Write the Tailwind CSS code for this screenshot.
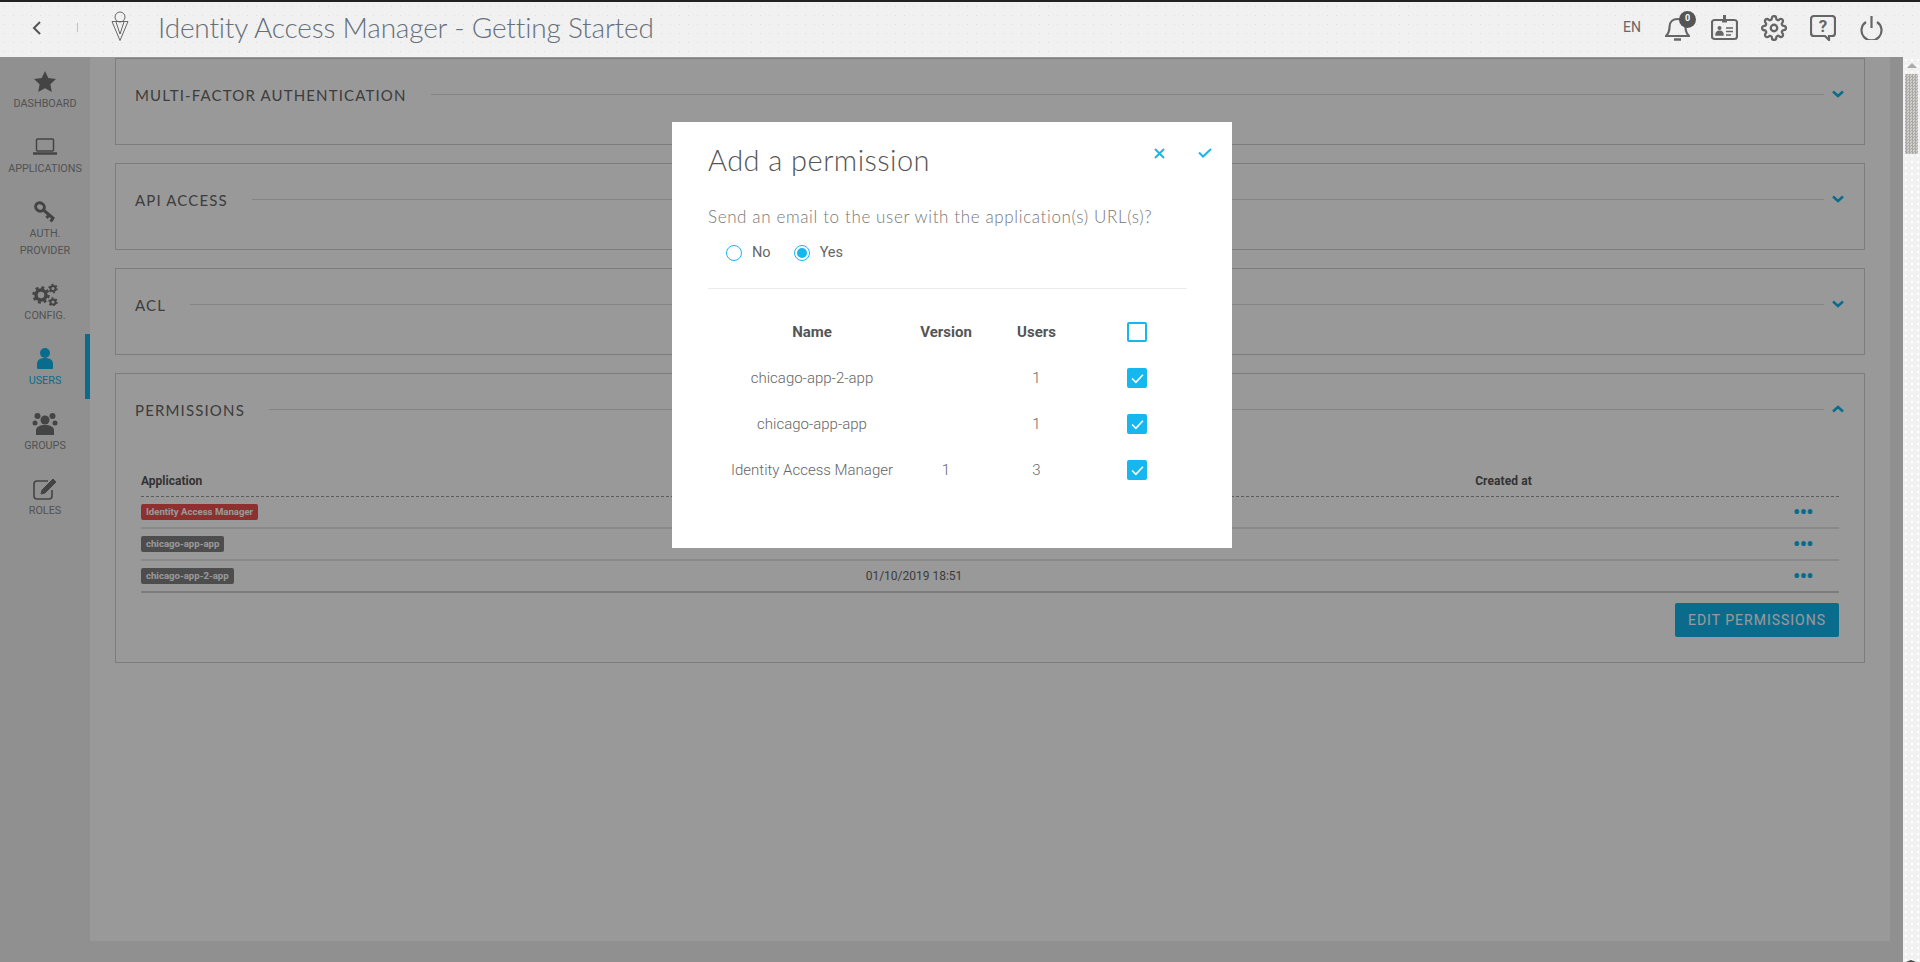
<!DOCTYPE html>
<html lang="en">

<head>
    <meta charset="UTF-8">
    <meta name="viewport" content="width=device-width, initial-scale=1.0">
    <title>Identity Access Manager - Getting Started</title>
    <script src="https://cdn.jsdelivr.net/npm/@tailwindcss/browser@4"></script>
</head>

<body class="relative h-[962px] overflow-hidden bg-[#f1f1f1] font-['Roboto',sans-serif]">
    <!-- header -->
    <header class="relative flex h-[57px] items-center border-t-2 border-[#222] bg-[#f1f1f1] bg-[radial-gradient(#dcdcdc_0.5px,transparent_0.8px)] bg-size-[9px_9px]">
        <svg class="ml-[32px] h-[14px] w-[10px] -translate-y-[2px]" viewBox="0 0 10 14" fill="none" stroke="#555" stroke-width="2"><path d="M8 1 2 7l6 6" /></svg>
        <div class="ml-[35px] h-[9px] w-px -translate-y-[2px] bg-[#c9c0b8]"></div>
        <svg class="ml-[33px] h-[30px] w-[18px] -translate-y-[4px]" viewBox="0 0 18 30" fill="none" stroke="#666" stroke-width="1">
            <circle cx="9" cy="6" r="5" />
            <path d="M1 10.500h16L9 29.500zM5 11l4 12 4-12" />
        </svg>
        <h1 class="ml-[29px] -translate-y-[3px] font-['Lato',sans-serif] text-[28px] font-light tracking-[-0.18px] text-[#66707a]">Identity Access Manager - Getting Started</h1>
        <div class="ml-auto flex items-center text-[#666]">
            <span class="mr-[24px] -translate-y-[2px] text-[14px]">EN</span>
            <div class="relative mr-[21px] h-[28px] w-[25px] -translate-y-[2px]">
                <svg class="h-[28px] w-[25px]" viewBox="0 0 25 28" fill="none" stroke="#666" stroke-width="2.200">
                    <path d="M1 22c2-2 3.500-4 3.500-9 0-5 3.500-8 8-8s8 3 8 8c0 5 1.500 7 3.500 9z" />
                    <path d="M9 25.500h7" stroke-width="2.500" />
                </svg>
                <span class="absolute -right-[6px] -top-[3px] flex h-[17px] w-[17px] items-center justify-center rounded-full bg-[#555] text-[9px] font-bold text-white">0</span>
            </div>
            <svg class="mr-[23px] h-[26px] w-[27px] -translate-y-[2px]" viewBox="0 0 27 26" fill="none" stroke="#666" stroke-width="2.200">
                <rect x="1" y="5" width="25" height="19" rx="2.500" />
                <path d="M11 6h5M13.500 0v5" stroke-width="3" />
                <circle cx="8.500" cy="13" r="2" fill="#666" stroke="none" />
                <path d="M5 20c0-5 7-5 7 0zM15 13h7M15 16.500h7M15 20h5" fill="#666" stroke-width="1.500" />
            </svg>
            <svg class="mr-[23px] h-[26px] w-[26px] -translate-y-[2px]" viewBox="0 0 24 24" fill="none" stroke="#666" stroke-width="2.100">
                <circle cx="12" cy="12" r="3" />
                <path d="M19.400 15a1.650 1.650 0 0 0 .33 1.820l.06.06a2 2 0 0 1 0 2.830 2 2 0 0 1-2.830 0l-.06-.06a1.650 1.650 0 0 0-1.820-.33 1.650 1.650 0 0 0-1 1.510V21a2 2 0 0 1-2 2 2 2 0 0 1-2-2v-.09A1.650 1.650 0 0 0 9 19.400a1.650 1.650 0 0 0-1.820.33l-.06.06a2 2 0 0 1-2.830 0 2 2 0 0 1 0-2.830l.06-.06a1.650 1.650 0 0 0 .33-1.820 1.650 1.650 0 0 0-1.510-1H3a2 2 0 0 1-2-2 2 2 0 0 1 2-2h.09A1.650 1.650 0 0 0 4.600 9a1.650 1.650 0 0 0-.33-1.820l-.06-.06a2 2 0 0 1 0-2.830 2 2 0 0 1 2.830 0l.06.06a1.650 1.650 0 0 0 1.820.33H9a1.650 1.650 0 0 0 1-1.510V3a2 2 0 0 1 2-2 2 2 0 0 1 2 2v.09a1.650 1.650 0 0 0 1 1.510 1.650 1.650 0 0 0 1.820-.33l.06-.06a2 2 0 0 1 2.830 0 2 2 0 0 1 0 2.830l-.06.06a1.650 1.650 0 0 0-.33 1.820V9a1.650 1.650 0 0 0 1.510 1H21a2 2 0 0 1 2 2 2 2 0 0 1-2 2h-.09a1.650 1.650 0 0 0-1.510 1z" />
            </svg>
            <div class="relative mr-[24px] h-[26px] w-[26px] -translate-y-[2px]">
                <svg class="h-[26px] w-[26px]" viewBox="0 0 26 26" fill="none" stroke="#666" stroke-width="2.200">
                    <path d="M4 1h18a3 3 0 0 1 3 3v14a3 3 0 0 1-3 3h-3v4l-4-4H4a3 3 0 0 1-3-3V4a3 3 0 0 1 3-3z" />
                </svg>
                <span class="absolute inset-x-0 top-[2px] text-center text-[17px] font-bold leading-[18px] text-[#666]">?</span>
            </div>
            <svg class="mr-[37px] h-[24px] w-[23px] -translate-y-[2px]" viewBox="0 0 23 24" fill="none" stroke="#666" stroke-width="2.200">
                <path d="M6 6a10 10 0 1 0 11 0M11.500 0v12" />
            </svg>
        </div>
    </header>

    <div class="flex h-[905px]">
        <!-- sidebar -->
        <nav class="w-[90px] shrink-0 bg-[#f0f0f0] text-center text-[10.800px] leading-[17px] text-[#8a8a8a]">
            <a class="flex flex-col items-center pb-[10px] pt-[13px]">
                <svg class="mb-px h-[24px] w-[24px]" viewBox="0 0 24 24" fill="#727272"><path d="m12 1 3.300 7 7.700 1-5.600 5.300 1.400 7.700-6.800-3.700L5.200 22l1.400-7.700L1 9l7.700-1z" /></svg>
                <span>DASHBOARD</span>
            </a>
            <a class="flex flex-col items-center pb-[10px] pt-[13px]">
                <svg class="mb-px h-[24px] w-[26px]" viewBox="0 0 26 24" fill="none" stroke="#727272" stroke-width="1.500">
                    <rect x="4.500" y="4" width="17" height="12" rx="1" />
                    <path d="M1 18.500h24" stroke-width="2.500" />
                </svg>
                <span>APPLICATIONS</span>
            </a>
            <a class="flex flex-col items-center pb-[10px] pt-[13px]">
                <svg class="mb-px h-[24px] w-[24px]" viewBox="0 0 24 24" fill="none" stroke="#727272" stroke-width="3">
                    <ellipse cx="7" cy="7" rx="4.500" ry="4" transform="rotate(30 7 7)" />
                    <path d="m11 10.500 10 8.500M16 15l-2.500 3M20 18.500l-2.500 3" />
                </svg>
                <span>AUTH.<br>PROVIDER</span>
            </a>
            <a class="flex flex-col items-center pb-[10px] pt-[13px]">
                <svg class="mb-px h-[24px] w-[26px]" viewBox="0 0 26 24" fill="none" stroke="#727272">
                    <circle cx="9" cy="13" r="5" stroke-width="3.500" />
                    <circle cx="9" cy="13" r="7.500" stroke-width="2.500" stroke-dasharray="3 2.900" />
                    <circle cx="21" cy="6.500" r="2.500" stroke-width="2" />
                    <circle cx="21" cy="6.500" r="4" stroke-width="1.500" stroke-dasharray="2 2.200" />
                    <circle cx="21" cy="20" r="2.500" stroke-width="2" />
                    <circle cx="21" cy="20" r="4" stroke-width="1.500" stroke-dasharray="2 2.200" />
                </svg>
                <span>CONFIG.</span>
            </a>
            <a class="relative flex flex-col items-center pb-[10px] pt-[13px] text-[#12b5ec]">
                <svg class="mb-px h-[24px] w-[24px]" viewBox="0 0 24 24" fill="#12b5ec">
                    <circle cx="12" cy="6" r="5" />
                    <path d="M4 21v-4c0-4 3-6 8-6s8 2 8 6v4q0 1-1 1H5q-1 0-1-1z" />
                </svg>
                <span>USERS</span>
                <span class="absolute right-0 top-0 h-full w-[5px] bg-[#12b5ec]"></span>
            </a>
            <a class="flex flex-col items-center pb-[10px] pt-[13px]">
                <svg class="mb-px h-[24px] w-[26px]" viewBox="0 0 26 24" fill="#727272">
                    <circle cx="5.500" cy="4" r="3" /><circle cx="20.500" cy="4" r="3" />
                    <circle cx="13" cy="8" r="4.500" />
                    <circle cx="3" cy="11" r="2.500" /><circle cx="23" cy="11" r="2.500" />
                    <path d="M4 23v-5c0-3 4-5 9-5s9 2 9 5v5z" />
                </svg>
                <span>GROUPS</span>
            </a>
            <a class="flex flex-col items-center pb-[10px] pt-[13px]">
                <svg class="mb-px h-[24px] w-[26px]" viewBox="0 0 26 24" fill="none" stroke="#727272" stroke-width="1.600">
                    <path d="M20 13v6a3 3 0 0 1-3 3H5a3 3 0 0 1-3-3V7a3 3 0 0 1 3-3h11" />
                    <path d="m9 17 1-4L21 2l3 3-11 11z" fill="#727272" stroke-width="1" />
                </svg>
                <span>ROLES</span>
            </a>
        </nav>

        <!-- page -->
        <div class="min-w-0 flex-1 bg-[#f0f0f0] pb-[21px] pr-[13px]">
            <main class="flex h-full flex-col gap-[18px] overflow-hidden bg-white px-[25px] pt-px">
                <section class="h-[87px] shrink-0 border border-[#d0d0d0] px-[19px] pt-[28px]">
                    <div class="flex h-[16px] items-center">
                        <h2 class="font-['Lato',sans-serif] text-[15px] tracking-[1.150px] text-[#666]">MULTI-FACTOR AUTHENTICATION</h2>
                        <div class="ml-[24px] h-px flex-1 -translate-y-[1px] bg-[#dcdcdc]"></div>
                        <svg class="ml-[8px] mr-[1px] h-[8px] w-[12px] -translate-y-[1px]" viewBox="0 0 12 8" fill="none" stroke="#12b5ec" stroke-width="2.500"><path d="m1 1.500 5 4.500 5-4.500" /></svg>
                    </div>
                </section>
                <section class="h-[87px] shrink-0 border border-[#d0d0d0] px-[19px] pt-[28px]">
                    <div class="flex h-[16px] items-center">
                        <h2 class="font-['Lato',sans-serif] text-[15px] tracking-[1.150px] text-[#666]">API ACCESS</h2>
                        <div class="ml-[24px] h-px flex-1 -translate-y-[1px] bg-[#dcdcdc]"></div>
                        <svg class="ml-[8px] mr-[1px] h-[8px] w-[12px] -translate-y-[1px]" viewBox="0 0 12 8" fill="none" stroke="#12b5ec" stroke-width="2.500"><path d="m1 1.500 5 4.500 5-4.500" /></svg>
                    </div>
                </section>
                <section class="h-[87px] shrink-0 border border-[#d0d0d0] px-[19px] pt-[28px]">
                    <div class="flex h-[16px] items-center">
                        <h2 class="font-['Lato',sans-serif] text-[15px] tracking-[1.150px] text-[#666]">ACL</h2>
                        <div class="ml-[24px] h-px flex-1 -translate-y-[1px] bg-[#dcdcdc]"></div>
                        <svg class="ml-[8px] mr-[1px] h-[8px] w-[12px] -translate-y-[1px]" viewBox="0 0 12 8" fill="none" stroke="#12b5ec" stroke-width="2.500"><path d="m1 1.500 5 4.500 5-4.500" /></svg>
                    </div>
                </section>
                <section class="h-[290px] shrink-0 border border-[#d0d0d0] px-[19px] pt-[28px]">
                    <div class="flex h-[16px] items-center">
                        <h2 class="font-['Lato',sans-serif] text-[15px] tracking-[1.150px] text-[#666]">PERMISSIONS</h2>
                        <div class="ml-[24px] h-px flex-1 -translate-y-[1px] bg-[#dcdcdc]"></div>
                        <svg class="ml-[8px] mr-[1px] h-[8px] w-[12px] -translate-y-[1px]" viewBox="0 0 12 8" fill="none" stroke="#12b5ec" stroke-width="2.500"><path d="m1 6.500 5-4.500 5 4.500" /></svg>
                    </div>
                    <div class="mx-[6px] mt-[47px] text-[12px] text-[#666]">
                        <div class="flex h-[32px] items-center border-b border-dashed border-[#999] font-bold text-[#555]">
                            <span>Application</span>
                            <span class="ml-[1273px] tracking-[0.1px]">Created at</span>
                        </div>
                        <div class="flex h-[32px] items-center border-b-2 border-[#e4e4e4]">
                            <span class="rounded-[2px] bg-[#ee4f4f] px-[5px] text-[9.600px] font-bold leading-[16px] text-white">Identity Access Manager</span>
                            <span class="ml-auto mr-[26px] text-[20px] font-bold leading-[10px] tracking-[-0.5px] text-[#12b5ec]">•••</span>
                        </div>
                        <div class="flex h-[32px] items-center border-b-2 border-[#e4e4e4]">
                            <span class="rounded-[2px] bg-[#808080] px-[5px] text-[9.600px] font-bold leading-[16px] text-white">chicago-app-app</span>
                            <span class="ml-auto mr-[26px] text-[20px] font-bold leading-[10px] tracking-[-0.5px] text-[#12b5ec]">•••</span>
                        </div>
                        <div class="relative flex h-[32px] items-center border-b-2 border-[#d0d0d0]">
                            <span class="rounded-[2px] bg-[#808080] px-[5px] text-[9.600px] font-bold leading-[16px] text-white">chicago-app-2-app</span>
                            <span class="ml-[632px]">01/10/2019 18:51</span>
                            <span class="ml-auto mr-[26px] text-[20px] font-bold leading-[10px] tracking-[-0.5px] text-[#12b5ec]">•••</span>
                        </div>
                        <div class="mt-[10px] flex justify-end">
                            <button class="h-[34px] w-[164px] rounded-[2px] bg-[#12b5ec] text-[14px] tracking-[1px] text-white">EDIT PERMISSIONS</button>
                        </div>
                    </div>
                </section>
            </main>
        </div>

        <!-- scrollbar -->
        <div class="relative w-[17px] shrink-0 bg-[#f1f1f1] bg-[radial-gradient(#fff_0.8px,transparent_1px)] bg-size-[6px_6px]">
            <div class="mx-auto mt-[6px] h-0 w-0 border-x-[5px] border-b-[5px] border-x-transparent border-b-[#aaa]"></div>
            <div class="mx-auto mt-[6px] h-[80px] w-[13px] bg-[#cbc8c2] bg-[repeating-conic-gradient(#a9a9a9_0_25%,#d2cfc9_0_50%)] bg-size-[3px_3px]"></div>
            <div class="absolute bottom-0 left-[3px] h-0 w-0 border-x-[5px] border-b-[2px] border-x-transparent border-b-[#444]"></div>
        </div>
    </div>

    <!-- backdrop -->
    <div class="absolute bottom-0 left-0 right-[17px] top-[57px] bg-black/40"></div>

    <!-- modal -->
    <div class="absolute left-[672px] top-[122px] h-[426px] w-[560px] bg-white pl-[36px] pr-[45px] text-[15px] text-[#666]">
        <div class="flex h-[64px] items-start">
            <h2 class="mt-[18px] font-['Lato',sans-serif] text-[29px] font-light leading-[40px] tracking-[0.45px] text-[#555]">Add a permission</h2>
            <svg class="ml-auto mt-[26px] h-[11px] w-[11px]" viewBox="0 0 11 11" fill="none" stroke="#16b7ee" stroke-width="2"><path d="m1 1 9 9M10 1l-9 9" /></svg>
            <svg class="ml-[33px] mr-[-25px] mt-[26px] h-[10px] w-[14px]" viewBox="0 0 14 10" fill="none" stroke="#16b7ee" stroke-width="2"><path d="m1 4.500 4 4 8-7.500" /></svg>
        </div>
        <p class="mt-[20px] font-['Lato',sans-serif] text-[17px] font-light leading-[22px] tracking-[0.63px] text-[#777]">Send an email to the user with the application(s) URL(s)?</p>
        <div class="ml-[18px] mt-[15px] flex h-[20px] items-center text-[14.500px]">
            <span class="h-[16px] w-[16px] rounded-full border border-[#16b7ee]"></span>
            <span class="ml-[10px]">No</span>
            <span class="ml-[23px] flex h-[16px] w-[16px] items-center justify-center rounded-full border border-[#16b7ee]"><span class="h-[10px] w-[10px] rounded-full bg-[#16b7ee]"></span></span>
            <span class="ml-[10px]">Yes</span>
        </div>
        <div class="mt-[25px] h-px bg-[#ececec]"></div>
        <div class="-ml-px mt-[33px] grid w-[480px] grid-cols-[210px_58px_123px_78px] items-center text-center">
            <span class="h-[40px] font-bold leading-[20px] text-[#555]">Name</span>
            <span class="h-[40px] font-bold leading-[20px] text-[#555]">Version</span>
            <span class="h-[40px] font-bold leading-[20px] text-[#555]">Users</span>
            <span class="h-[40px]"><span class="mx-auto block h-[20px] w-[20px] rounded-[2px] border-2 border-[#16b7ee]"></span></span>

            <span class="h-[46px] font-light leading-[32px]">chicago-app-2-app</span>
            <span class="h-[46px]"></span>
            <span class="h-[46px] font-light leading-[32px]">1</span>
            <span class="h-[46px] pt-[6px]"><span class="mx-auto flex h-[20px] w-[20px] items-center justify-center rounded-[2px] bg-[#16b7ee]"><svg class="h-[11px] w-[13px]" viewBox="0 0 12 10" fill="none" stroke="#fff" stroke-width="1.500"><path d="m1 5 3.500 3.500L11 1.500" /></svg></span></span>

            <span class="h-[46px] font-light leading-[32px]">chicago-app-app</span>
            <span class="h-[46px]"></span>
            <span class="h-[46px] font-light leading-[32px]">1</span>
            <span class="h-[46px] pt-[6px]"><span class="mx-auto flex h-[20px] w-[20px] items-center justify-center rounded-[2px] bg-[#16b7ee]"><svg class="h-[11px] w-[13px]" viewBox="0 0 12 10" fill="none" stroke="#fff" stroke-width="1.500"><path d="m1 5 3.500 3.500L11 1.500" /></svg></span></span>

            <span class="h-[46px] font-light leading-[32px]">Identity Access Manager</span>
            <span class="h-[46px] font-light leading-[32px]">1</span>
            <span class="h-[46px] font-light leading-[32px]">3</span>
            <span class="h-[46px] pt-[6px]"><span class="mx-auto flex h-[20px] w-[20px] items-center justify-center rounded-[2px] bg-[#16b7ee]"><svg class="h-[11px] w-[13px]" viewBox="0 0 12 10" fill="none" stroke="#fff" stroke-width="1.500"><path d="m1 5 3.500 3.500L11 1.500" /></svg></span></span>
        </div>
    </div>
</body>

</html>
